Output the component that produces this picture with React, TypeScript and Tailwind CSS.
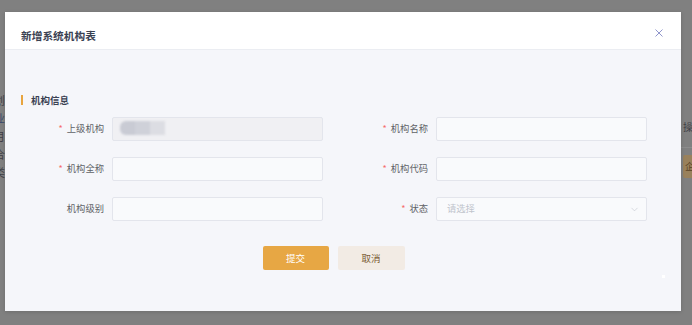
import { ChevronDown } from 'lucide-react';

const font = { fontFamily: '"Noto Sans CJK SC", "Noto Sans", sans-serif' };

interface FieldProps {
    label: string;
    required?: boolean;
    children?: React.ReactNode;
    disabled?: boolean;
}

function Field({ label, required, children, disabled }: FieldProps) {
    return (
        <div className="flex items-center">
            <div className="w-[80px] flex justify-end items-center text-[9.3px] text-[#606266]">
                {required && <span className="text-[#f56c6c] mr-[4px] text-[9px]">*</span>}
                <span>{label}</span>
            </div>
            <div
                className={
                    'ml-[8px] w-[211px] h-[24px] border border-[#e3e5ec] rounded-[2px] relative flex items-center ' +
                    (disabled ? 'bg-[#f0f0f3]' : 'bg-[#f9fafc]')
                }
            >
                {children}
            </div>
        </div>
    );
}

export default function App() {
    return (
        <div className="relative w-[692px] h-[325px] overflow-hidden bg-[#808080]" style={font}>
            {/* page behind the mask */}
            <div className="absolute left-[-6px] top-[93px] flex flex-col gap-[4px] text-[11px] leading-[14px] text-[#3f3f46]">
                <span>划</span>
                <span className="text-[#3b4a6b]">业</span>
                <span>月</span>
                <span>合</span>
                <span>类</span>
            </div>
            <div className="absolute left-[683px] top-[119px] text-[10px] whitespace-nowrap text-[#3f3f46]">操作</div>
            <div className="absolute left-[681px] top-[147px] w-[11px] h-px bg-[#8c8c8c]" />
            <div className="absolute left-[683px] top-[155px] w-[9px] h-[23px] bg-[#99815c] rounded-l-[2px] text-[9px] leading-[23px] text-[#5a4326] pl-[2px] overflow-hidden">
                企
            </div>

            {/* dialog */}
            <div className="absolute left-[5px] top-[12px] w-[676px] h-[299px] bg-[#f5f6fa] shadow-[0_1px_4px_rgba(0,0,0,0.15)] flex flex-col">
                <div className="h-[38px] bg-white border-b border-[#ebedf2] flex items-start justify-between px-[16px] pt-[17px]">
                    <span className="text-[10.7px] leading-[14px] font-semibold text-[#3a4152]">新增系统机构表</span>
                    <svg width="8" height="8" viewBox="0 0 8 8" className="mr-[2px]">
                        <path d="M0.5 0.5 L7.5 7.5 M7.5 0.5 L0.5 7.5" stroke="#9096cc" strokeWidth="1" />
                    </svg>
                </div>

                <div className="flex-1 pt-[45px] relative">
                    <div className="flex items-center pl-[16px] h-[10px]">
                        <div className="w-[2px] h-[10px] bg-[#e8a53f]" />
                        <span className="ml-[8px] text-[9.5px] font-semibold text-[#3a4152]">机构信息</span>
                    </div>

                    <div className="mt-[12px] pl-[19px] grid grid-cols-[299px_299px] gap-x-[25px] gap-y-[16px]">
                        <Field label="上级机构" required disabled>
                            <div className="absolute left-[7px] top-[3px] flex blur-[0.8px]">
                                <div className="w-[15px] h-[14px] bg-[#c9cbd4] rounded-l-[6px]" />
                                <div className="w-[15px] h-[14px] bg-[#cfd1d9]" />
                                <div className="w-[15px] h-[14px] bg-[#dcdde3]" />
                            </div>
                        </Field>
                        <Field label="机构名称" required />
                        <Field label="机构全称" required />
                        <Field label="机构代码" required />
                        <Field label="机构级别" />
                        <Field label="状态" required>
                            <span className="ml-[10px] text-[9.3px] text-[#c0c4cc]">请选择</span>
                            <ChevronDown className="absolute right-[6px] top-[6px] text-[#c0c4cc]" size={11} strokeWidth={1.3} />
                        </Field>
                    </div>

                    <div className="mt-[25px] pl-[19px] w-[638px] flex justify-center gap-[9px]">
                        <button className="w-[66px] h-[24px] bg-[#e7a744] text-white text-[9.5px] rounded-[2px]">
                            提交
                        </button>
                        <button className="w-[67px] h-[24px] bg-[#f2ebe4] text-[#7b5c34] text-[9.5px] rounded-[2px]">
                            取消
                        </button>
                    </div>

                    <div className="absolute left-[657px] top-[225px] w-[3px] h-[3px] bg-white" />
                </div>
            </div>
        </div>
    );
}
